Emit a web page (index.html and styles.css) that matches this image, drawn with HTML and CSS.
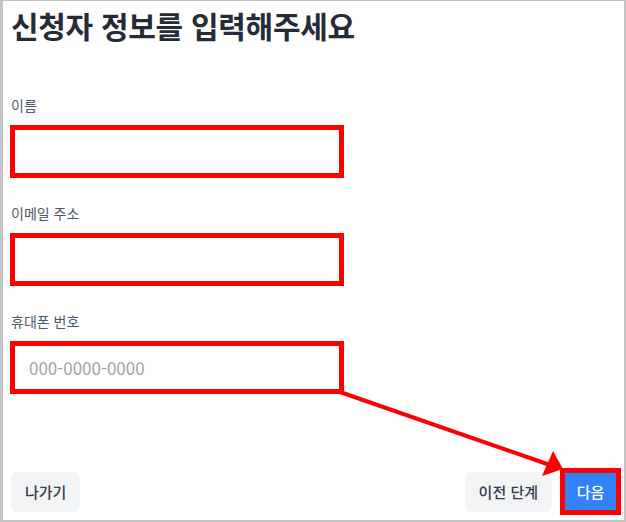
FILE: index.html
```html
<!DOCTYPE html>
<html lang="ko">
<head>
    <meta charset="UTF-8">
    <meta name="viewport" content="width=device-width, initial-scale=1.0">
    <title>신청자 정보</title>
    <link rel="stylesheet" href="styles.css">
</head>
<body>
    <div class="frame">
        <h1 class="title">신청자 정보를 입력해주세요</h1>

        <form class="form" onsubmit="return false">
            <!-- Name -->
            <div class="field">
                <label for="name">이름</label>
                <input type="text" id="name">
            </div>

            <!-- Email -->
            <div class="field">
                <label for="email">이메일 주소</label>
                <input type="email" id="email">
            </div>

            <!-- Phone -->
            <div class="field">
                <label for="phone">휴대폰 번호</label>
                <input type="tel" id="phone" placeholder="000-0000-0000">
            </div>
        </form>

        <div class="actions">
            <button class="btn btn-light">나가기</button>
            <div class="actions-right">
                <button class="btn btn-light">이전 단계</button>
                <span class="highlight">
                    <button class="btn btn-primary">다음</button>
                </span>
            </div>
        </div>

        <!-- Annotation arrow -->
        <svg class="arrow" width="626" height="522" viewBox="0 0 626 522">
            <line x1="340" y1="392" x2="550" y2="465" stroke="#f00" stroke-width="4"/>
            <polygon points="563,469 542,476 553,451" fill="#f00"/>
        </svg>
    </div>
</body>
</html>
```

FILE: styles.css
```css
/* General Styling */
* {
    box-sizing: border-box;
}

body {
    margin: 0;
    font-family: "Noto Sans CJK KR", "Noto Sans", sans-serif;
    background-color: #ffffff;
    color: #333d4b;
}

/* Screenshot frame */
.frame {
    position: relative;
    width: 626px;
    height: 522px;
    border: 1px solid #c4c4c4;
    border-left-width: 3px;
    border-right-width: 2px;
    border-bottom-width: 2px;
    padding: 4px 3px 5px 8px;
    display: flex;
    flex-direction: column;
}

/* Title */
.title {
    margin: 0;
    font-size: 30px;
    font-weight: 700;
    line-height: 40px;
    color: #262c36;
    letter-spacing: -0.3px;
}

/* Form */
.form {
    margin-top: 50px;
    display: flex;
    flex-direction: column;
    gap: 25px;
}

.field {
    display: flex;
    flex-direction: column;
    gap: 10px;
}

.field label {
    font-size: 14px;
    line-height: 20px;
    color: #4e5968;
}

.field input {
    width: 334px;
    height: 53px;
    margin-left: -1px;
    padding: 0 14px;
    border: 5px solid #ff0000;
    border-radius: 0;
    font-family: inherit;
    font-size: 17px;
    color: #333d4b;
    outline: none;
}

.field input::placeholder {
    color: #9ea4ab;
}

/* Bottom buttons */
.actions {
    margin-top: auto;
    display: flex;
    justify-content: space-between;
    align-items: center;
}

.actions-right {
    display: flex;
    align-items: center;
    gap: 8px;
}

.btn {
    height: 40px;
    padding: 0 14px;
    border: none;
    border-radius: 7px;
    font-family: inherit;
    font-size: 15px;
    font-weight: 500;
    cursor: pointer;
}

.btn-light {
    background-color: #f2f4f6;
    color: #333d4b;
}

/* Red annotation box round the next button */
.highlight {
    display: flex;
    border: 5px solid #ff0000;
}

.btn-primary {
    width: 51px;
    height: 37px;
    padding: 0;
    border-radius: 1px;
    background-color: #3182f6;
    color: #ffffff;
}

/* Annotation overlay */
.arrow {
    position: absolute;
    top: -1px;
    left: -3px;
    pointer-events: none;
}
```
